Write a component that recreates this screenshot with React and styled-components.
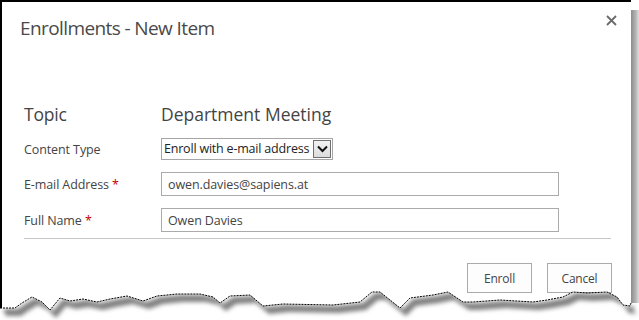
import React from "react";
import styled, { createGlobalStyle } from "styled-components";

const GlobalStyle = createGlobalStyle`
  html, body {
    margin: 0;
    padding: 0;
    background: #ffffff;
  }
  body {
    font-family: "Open Sans", "Noto Sans", sans-serif;
    color: #444444;
  }
`;

const Page = styled.div`
  position: relative;
  width: 639px;
  height: 320px;
  overflow: hidden;
  display: flex;
  align-items: flex-start;
`;

const Sheet = styled.div`
  width: 629px;
  height: 318px;
  border-top: 2px solid #000000;
  border-left: 2px solid #000000;
  background: #ffffff;
  display: flex;
  flex-direction: column;
`;

const SideShadow = styled.div`
  width: 8px;
  height: 300px;
  margin-top: 10px;
  background: linear-gradient(to right, #8c8c8c, #b5b5b5 60%, #e0e0e0);
`;

const Header = styled.div`
  display: flex;
  justify-content: space-between;
  align-items: flex-start;
  padding: 13px 20px 0 18px;
  height: 99px;
  box-sizing: border-box;
`;

const Title = styled.h1`
  margin: 0;
  font-size: 19px;
  font-weight: 400;
  letter-spacing: -0.6px;
  color: #4a4a4a;
`;

const CloseButton = styled.button`
  background: none;
  border: none;
  padding: 0;
  margin: 0 -9px 0 0;
  width: 14px;
  height: 14px;
  cursor: pointer;
  display: flex;
`;

const Form = styled.div`
  display: grid;
  grid-template-columns: 137px 398px;
  row-gap: 12px;
  padding-left: 22px;
  align-items: center;
`;

const Label = styled.div`
  font-size: ${(p) => (p.$big ? "17.5px" : "12.5px")};
  color: #444444;
  letter-spacing: ${(p) => (p.$big ? "-0.2px" : "-0.1px")};
`;

const Required = styled.span`
  color: #bf0000;
`;

const Value = styled.div`
  font-size: 17.5px;
  color: #444444;
  letter-spacing: 0px;
  height: 25px;
  display: flex;
  align-items: center;
`;

const Select = styled.div`
  display: inline-flex;
  align-items: stretch;
  width: 172px;
  height: 22px;
  box-sizing: border-box;
  border: 1px solid #a6a6a6;
  justify-self: start;
`;

const SelectText = styled.span`
  flex: 1;
  font-size: 12.5px;
  letter-spacing: -0.2px;
  color: #222222;
  padding-left: 2px;
  line-height: 20px;
  white-space: nowrap;
  overflow: hidden;
`;

const SelectArrow = styled.span`
  width: 16px;
  margin: 1px;
  border: 1px solid #707070;
  background: linear-gradient(#f2f2f2, #dcdcdc);
  display: flex;
  align-items: center;
  justify-content: center;
`;

const Input = styled.div`
  height: 24px;
  box-sizing: border-box;
  border: 1px solid #ababab;
  padding-left: 6px;
  font-size: 12.5px;
  letter-spacing: -0.1px;
  color: #444444;
  display: flex;
  align-items: center;
`;

const Divider = styled.hr`
  margin: 6px 20px 0 22px;
  border: none;
  border-top: 1px solid #c6c6c6;
`;

const Actions = styled.div`
  display: flex;
  justify-content: flex-end;
  gap: 15px;
  padding: 24px 19px 0 0;
`;

const Button = styled.button`
  width: 65px;
  height: 30px;
  box-sizing: border-box;
  background: #fdfdfd;
  border: 1px solid #ababab;
  font-family: "Open Sans", "Noto Sans", sans-serif;
  font-size: 12px;
  letter-spacing: -0.2px;
  color: #444444;
  cursor: pointer;
`;

const TornEdge = styled.svg`
  position: absolute;
  left: 0;
  bottom: 0;
  width: 639px;
  height: 40px;
`;

const tear = [
  [0, 28], [15, 28], [22, 23], [32, 17], [42, 22], [50, 30], [60, 18],
  [70, 21], [83, 19], [97, 22], [110, 19], [127, 16], [143, 21], [157, 16],
  [177, 14], [200, 14], [213, 17], [220, 23], [230, 16], [250, 15],
  [263, 26], [283, 24], [333, 25], [360, 22], [372, 12], [380, 12],
  [400, 28], [410, 18], [433, 15], [448, 12], [463, 22], [473, 22],
  [500, 20], [533, 22], [547, 20], [563, 17], [573, 12], [587, 13],
  [607, 12], [617, 17], [623, 25], [630, 26], [631, 23],
];

const linePts = tear.map(([x, y]) => `${x},${y}`).join(" ");
const edge = tear.map(([x, y]) => `L${x},${y}`).join(" ");

const Torn = () => (
  <TornEdge viewBox="0 0 639 40">
    <defs>
      <filter id="blur" x="-5%" y="-50%" width="110%" height="200%">
        <feGaussianBlur stdDeviation="2" />
      </filter>
      <clipPath id="below">
        <path d={`M0,40 ${edge} L639,20 L639,40 Z`} />
      </clipPath>
    </defs>
    <path d={`M0,28 ${edge} L639,23 L639,40 L0,40 Z`} fill="#ffffff" />
    <g clipPath="url(#below)">
      <path
        d={"M" + tear.map(([x, y]) => `${x + 3},${y + 1}`).join(" L") + " L634,34 " +
          [...tear].reverse().map(([x, y]) => `L${x + 6},${y + 8}`).join(" ") + " Z"}
        fill="#808080"
        filter="url(#blur)"
      />
    </g>
    <polyline points={linePts} fill="none" stroke="#000000" strokeWidth="1" strokeDasharray="2 1" />
  </TornEdge>
);

const ChevronDown = () => (
  <svg width="11" height="8" viewBox="0 0 11 8">
    <path d="M1 1.5 L5.5 6 L10 1.5" fill="none" stroke="#111111" strokeWidth="2" />
  </svg>
);

const CloseIcon = () => (
  <svg width="11" height="11" viewBox="0 0 11 11">
    <path d="M1 1 L10 10 M10 1 L1 10" stroke="#6a6a6a" strokeWidth="1.8" />
  </svg>
);

export default function App() {
  return (
    <>
      <GlobalStyle />
      <Page>
        <Sheet>
          <Header>
            <Title>Enrollments - New Item</Title>
            <CloseButton aria-label="Close">
              <CloseIcon />
            </CloseButton>
          </Header>
          <Form>
            <Label $big>Topic</Label>
            <Value>Department Meeting</Value>

            <Label>Content Type</Label>
            <Select>
              <SelectText>Enroll with e-mail address</SelectText>
              <SelectArrow>
                <ChevronDown />
              </SelectArrow>
            </Select>

            <Label>
              E-mail Address <Required>*</Required>
            </Label>
            <Input>owen.davies@sapiens.at</Input>

            <Label>
              Full Name <Required>*</Required>
            </Label>
            <Input>Owen Davies</Input>
          </Form>
          <Divider />
          <Actions>
            <Button>Enroll</Button>
            <Button>Cancel</Button>
          </Actions>
        </Sheet>
        <SideShadow />
        <Torn />
      </Page>
    </>
  );
}
